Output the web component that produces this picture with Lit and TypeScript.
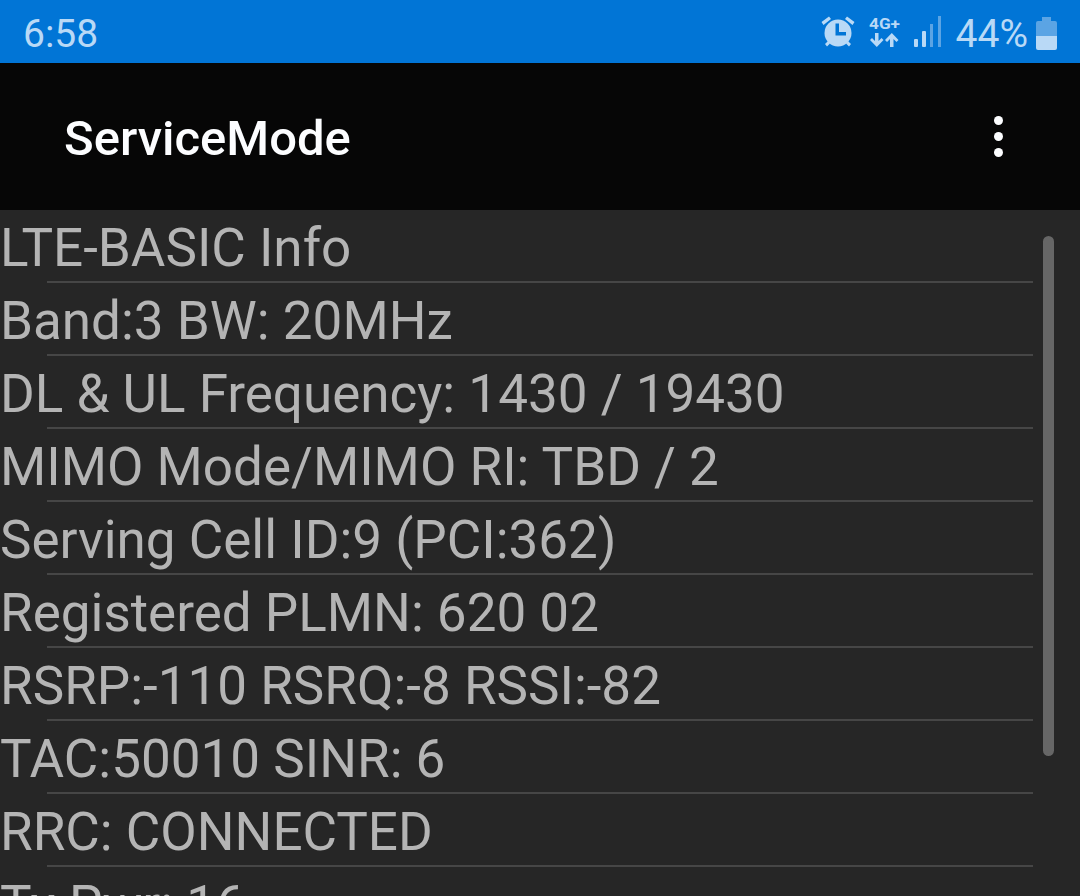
import { LitElement, html, css } from "lit";
import { customElement } from "lit/decorators.js";

const ROWS = [
  "LTE-BASIC Info",
  "Band:3 BW: 20MHz",
  "DL & UL Frequency: 1430 / 19430",
  "MIMO Mode/MIMO RI: TBD / 2",
  "Serving Cell ID:9 (PCI:362)",
  "Registered PLMN: 620 02",
  "RSRP:-110 RSRQ:-8 RSSI:-82",
  "TAC:50010 SINR: 6",
  "RRC: CONNECTED",
  "Tx Pwr: 16",
];

@customElement("app-root")
export class AppRoot extends LitElement {
  static styles = css`
    :host { display: block; width: 1080px; height: 896px; overflow: hidden; font-family: Roboto, "Liberation Sans", sans-serif; background: #262626; }
    .status { height: 63px; background: #0175d6; display: flex; align-items: center; color: #b9d9f6; padding: 0 0 0 23px; box-sizing: border-box; }
    .time { font-size: 39px; line-height: 63px; flex: 1; margin-top: 5px; }
    .icons { display: flex; align-items: center; height: 63px; }
    .pct { font-size: 39px; line-height: 63px; margin-left: 13px; margin-top: 5px; }
    svg { display: block; }
    .alarm { margin-right: 14px; }
    .net { margin-right: 12px; }
    .batt { margin: 3px 23px 0 8px; }
    .bar { height: 147px; background: #060606; display: flex; align-items: center; justify-content: space-between; padding: 0 77px 0 64px; box-sizing: border-box; }
    .title { color: #fcfdff; font-size: 49px; font-weight: 500; line-height: 60px; margin-top: 4px; }
    .list { position: relative; height: 686px; overflow: hidden; }
    .row { height: 73px; box-sizing: border-box; position: relative; color: #b4b4b4; font-size: 53px; line-height: 77px; white-space: nowrap; }
    .row::after { content: ""; position: absolute; left: 47px; width: 986px; bottom: 0; height: 2px; background: #464646; }
    .scroll { position: absolute; left: 1043px; top: 26px; width: 11px; height: 520px; border-radius: 6px; background: #666666; }
  `;

  render() {
    return html`
      <div class="status">
        <span class="time">6:58</span>
        <div class="icons">
          <svg class="alarm" width="34" height="32" viewBox="0 0 34 32" fill="#b9d9f6">
            <circle cx="17" cy="17" r="13.500"/>
            <path d="M0.500 6 L8 0.500 L10 3 L2.500 9 Z M33.500 6 L26 0.500 L24 3 L31.500 9 Z M4 28 L7 25 L9 27.500 L6 30.500 Z M30 28 L27 25 L25 27.500 L28 30.500 Z"/>
            <path d="M14.500 7.500 H18 V16 H25 V19.500 H14.500 Z" fill="#0175d6"/>
          </svg>
          <svg class="net" width="32" height="34" viewBox="0 0 32 34" fill="#b9d9f6">
            <text x="0" y="14" font-family="Roboto, sans-serif" font-weight="700" font-size="15" textLength="31" lengthAdjust="spacingAndGlyphs">4G+</text>
            <path d="M6 18 H9.500 V26 L12.500 23 L14.500 25 L7.800 32 L1 25 L3 23 L6 26 Z"/>
            <path d="M21 32 H24.500 V24 L27.500 27 L29.500 25 L22.800 18 L16 25 L18 27 L21 24 Z"/>
          </svg>
          <svg width="30" height="32" viewBox="0 0 30 32">
            <rect x="1" y="23" width="4" height="8" rx="1" fill="#b9d9f6"/>
            <rect x="9" y="15" width="4" height="16" rx="1" fill="#b9d9f6"/>
            <rect x="17" y="8" width="3" height="23" fill="#5ba4e4"/>
            <rect x="25" y="0" width="3" height="31" fill="#5ba4e4"/>
          </svg>
          <span class="pct">44%</span>
          <svg class="batt" width="21" height="33" viewBox="0 0 21 33">
            <path d="M6 0 H15 V4 H19 Q21 4 21 6 V19 H0 V6 Q0 4 2 4 H6 Z" fill="#5ba4e4"/>
            <path d="M0 19 H21 V31 Q21 33 19 33 H2 Q0 33 0 31 Z" fill="#b9d9f6"/>
          </svg>
        </div>
      </div>
      <div class="bar">
        <span class="title">ServiceMode</span>
        <svg width="9" height="41" viewBox="0 0 9 41" fill="#fcfdff">
          <circle cx="4.500" cy="4.500" r="4.500"/><circle cx="4.500" cy="20.500" r="4.500"/><circle cx="4.500" cy="36.500" r="4.500"/>
        </svg>
      </div>
      <div class="list">
        ${ROWS.map((r) => html`<div class="row">${r}</div>`)}
        <div class="scroll"></div>
      </div>
    `;
  }
}
